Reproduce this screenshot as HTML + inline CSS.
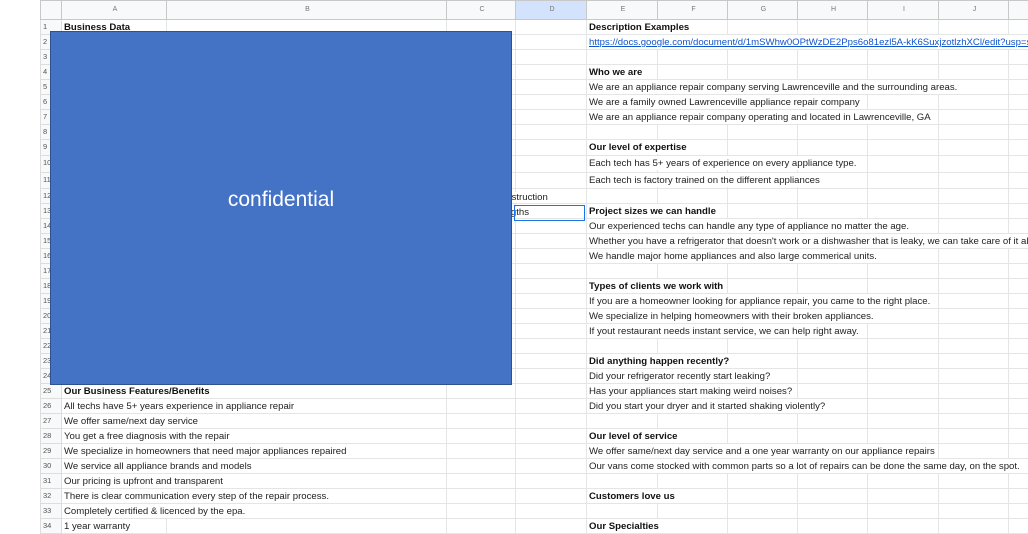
<!DOCTYPE html>
<html><head><style>
body{margin:0;width:1028px;height:534px;overflow:hidden;background:#fff;font-family:"Liberation Sans",Arial,sans-serif;position:relative}
table{position:absolute;left:40px;top:0;border-collapse:collapse;table-layout:fixed;width:998px}
td{border:1px solid #e4e5e5;padding:0 0 0 2px;font-size:9.6px;color:#222;white-space:nowrap;overflow:visible;height:14px;line-height:14px;max-width:0;vertical-align:top}
tr.h td{height:18px;font-size:7px;color:#777;text-align:center;background:#f8f9fa;border-color:#c8c8c8;line-height:18px;overflow:hidden}
td.rn{font-size:7.5px;color:#555;background:#f8f9fa;text-align:left;padding-left:2px;border-color:#ddd}
i,b,a{display:inline-block;vertical-align:top;line-height:15px;height:14px;position:relative;background:#fff;padding-right:2px}
i{font-style:normal}
b{font-weight:bold;color:#111}
a{color:#1155cc;text-decoration:underline}
.box{position:absolute;z-index:5;left:50px;top:31px;width:460px;height:352px;background:#4472c4;border:1px solid #2f528f;color:#fff;font-size:21px;text-align:center;line-height:336px}
.t{position:absolute;font-size:9.6px;color:#222;background:#fff}
.sel{position:absolute;z-index:4;left:514px;top:205px;width:71px;height:16px;border:1px solid #1a73e8;box-sizing:border-box}
</style></head><body>
<table>
<colgroup><col style="width:21px"><col style="width:105px"><col style="width:280px"><col style="width:69px"><col style="width:71px"><col style="width:71px"><col style="width:70px"><col style="width:70px"><col style="width:70px"><col style="width:71px"><col style="width:70px"><col style="width:30px"></colgroup>
<tr class="h"><td></td><td>A</td><td>B</td><td>C</td><td style="background:#d3e3fd">D</td><td>E</td><td>F</td><td>G</td><td>H</td><td>I</td><td>J</td><td></td></tr>
<tr><td class="rn">1</td><td><b>Business Data</b></td><td></td><td></td><td></td><td><b>Description Examples</b></td><td></td><td></td><td></td><td></td><td></td><td></td></tr>
<tr><td class="rn">2</td><td></td><td></td><td></td><td></td><td><a>https://docs.google.com/document/d/1mSWhw0OPtWzDE2Pps6o81ezl5A-kK6SuxjzotlzhXCl/edit?usp=s</a></td><td></td><td></td><td></td><td></td><td></td><td></td></tr>
<tr><td class="rn">3</td><td></td><td></td><td></td><td></td><td></td><td></td><td></td><td></td><td></td><td></td><td></td></tr>
<tr><td class="rn">4</td><td></td><td></td><td></td><td></td><td><b>Who we are</b></td><td></td><td></td><td></td><td></td><td></td><td></td></tr>
<tr><td class="rn">5</td><td></td><td></td><td></td><td></td><td><i>We are an appliance repair company serving Lawrenceville and the surrounding areas.</i></td><td></td><td></td><td></td><td></td><td></td><td></td></tr>
<tr><td class="rn">6</td><td></td><td></td><td></td><td></td><td><i>We are a family owned Lawrenceville appliance repair company</i></td><td></td><td></td><td></td><td></td><td></td><td></td></tr>
<tr><td class="rn">7</td><td></td><td></td><td></td><td></td><td><i>We are an appliance repair company operating and located in Lawrenceville, GA</i></td><td></td><td></td><td></td><td></td><td></td><td></td></tr>
<tr><td class="rn">8</td><td></td><td></td><td></td><td></td><td></td><td></td><td></td><td></td><td></td><td></td><td></td></tr>
<tr><td class="rn" style="height:15px">9</td><td></td><td></td><td></td><td></td><td><b>Our level of expertise</b></td><td></td><td></td><td></td><td></td><td></td><td></td></tr>
<tr><td class="rn" style="height:16px">10</td><td></td><td></td><td></td><td></td><td><i>Each tech has 5+ years of experience on every appliance type.</i></td><td></td><td></td><td></td><td></td><td></td><td></td></tr>
<tr><td class="rn" style="height:15px">11</td><td></td><td></td><td></td><td></td><td><i>Each tech is factory trained on the different appliances</i></td><td></td><td></td><td></td><td></td><td></td><td></td></tr>
<tr><td class="rn">12</td><td></td><td></td><td></td><td></td><td></td><td></td><td></td><td></td><td></td><td></td><td></td></tr>
<tr><td class="rn">13</td><td></td><td></td><td></td><td></td><td><b>Project sizes we can handle</b></td><td></td><td></td><td></td><td></td><td></td><td></td></tr>
<tr><td class="rn">14</td><td></td><td></td><td></td><td></td><td><i>Our experienced techs can handle any type of appliance no matter the age.</i></td><td></td><td></td><td></td><td></td><td></td><td></td></tr>
<tr><td class="rn" style="height:13px">15</td><td></td><td></td><td></td><td></td><td><i>Whether you have a refrigerator that doesn't work or a dishwasher that is leaky, we can take care of it all</i></td><td></td><td></td><td></td><td></td><td></td><td></td></tr>
<tr><td class="rn">16</td><td></td><td></td><td></td><td></td><td><i>We handle major home appliances and also large commerical units.</i></td><td></td><td></td><td></td><td></td><td></td><td></td></tr>
<tr><td class="rn" style="height:13px">17</td><td></td><td></td><td></td><td></td><td></td><td></td><td></td><td></td><td></td><td></td><td></td></tr>
<tr><td class="rn">18</td><td></td><td></td><td></td><td></td><td><b>Types of clients we work with</b></td><td></td><td></td><td></td><td></td><td></td><td></td></tr>
<tr><td class="rn" style="height:13px">19</td><td></td><td></td><td></td><td></td><td><i>If you are a homeowner looking for appliance repair, you came to the right place.</i></td><td></td><td></td><td></td><td></td><td></td><td></td></tr>
<tr><td class="rn">20</td><td></td><td></td><td></td><td></td><td><i>We specialize in helping homeowners with their broken appliances.</i></td><td></td><td></td><td></td><td></td><td></td><td></td></tr>
<tr><td class="rn">21</td><td></td><td></td><td></td><td></td><td><i>If yout restaurant needs instant service, we can help right away.</i></td><td></td><td></td><td></td><td></td><td></td><td></td></tr>
<tr><td class="rn" style="height:13px">22</td><td></td><td></td><td></td><td></td><td></td><td></td><td></td><td></td><td></td><td></td><td></td></tr>
<tr><td class="rn">23</td><td></td><td></td><td></td><td></td><td><b>Did anything happen recently?</b></td><td></td><td></td><td></td><td></td><td></td><td></td></tr>
<tr><td class="rn">24</td><td></td><td></td><td></td><td></td><td><i>Did your refrigerator recently start leaking?</i></td><td></td><td></td><td></td><td></td><td></td><td></td></tr>
<tr><td class="rn" style="height:13px">25</td><td><b>Our Business Features/Benefits</b></td><td></td><td></td><td></td><td><i>Has your appliances start making weird noises?</i></td><td></td><td></td><td></td><td></td><td></td><td></td></tr>
<tr><td class="rn">26</td><td><i>All techs have 5+ years experience in appliance repair</i></td><td></td><td></td><td></td><td><i>Did you start your dryer and it started shaking violently?</i></td><td></td><td></td><td></td><td></td><td></td><td></td></tr>
<tr><td class="rn">27</td><td><i>We offer same/next day service</i></td><td></td><td></td><td></td><td></td><td></td><td></td><td></td><td></td><td></td><td></td></tr>
<tr><td class="rn">28</td><td><i>You get a free diagnosis with the repair</i></td><td></td><td></td><td></td><td><b>Our level of service</b></td><td></td><td></td><td></td><td></td><td></td><td></td></tr>
<tr><td class="rn" style="height:13px">29</td><td><i>We specialize in homeowners that need major appliances repaired</i></td><td></td><td></td><td></td><td><i>We offer same/next day service and a one year warranty on our appliance repairs</i></td><td></td><td></td><td></td><td></td><td></td><td></td></tr>
<tr><td class="rn">30</td><td><i>We service all appliance brands and models</i></td><td></td><td></td><td></td><td><i>Our vans come stocked with common parts so a lot of repairs can be done the same day, on the spot.</i></td><td></td><td></td><td></td><td></td><td></td><td></td></tr>
<tr><td class="rn">31</td><td><i>Our pricing is upfront and transparent</i></td><td></td><td></td><td></td><td></td><td></td><td></td><td></td><td></td><td></td><td></td></tr>
<tr><td class="rn" style="height:13px">32</td><td><i>There is clear communication every step of the repair process.</i></td><td></td><td></td><td></td><td><b>Customers love us</b></td><td></td><td></td><td></td><td></td><td></td><td></td></tr>
<tr><td class="rn">33</td><td><i>Completely certified &amp; licenced by the epa.</i></td><td></td><td></td><td></td><td></td><td></td><td></td><td></td><td></td><td></td><td></td></tr>
<tr><td class="rn">34</td><td><i>1 year warranty</i></td><td></td><td></td><td></td><td><b>Our Specialties</b></td><td></td><td></td><td></td><td></td><td></td><td></td></tr>
</table>
<span class="t" style="left:494px;top:192px">Construction</span>
<span class="t" style="left:488px;top:207px">Strengths</span>
<div class="sel"></div>
<div class="box">confidential</div>
</body></html>
